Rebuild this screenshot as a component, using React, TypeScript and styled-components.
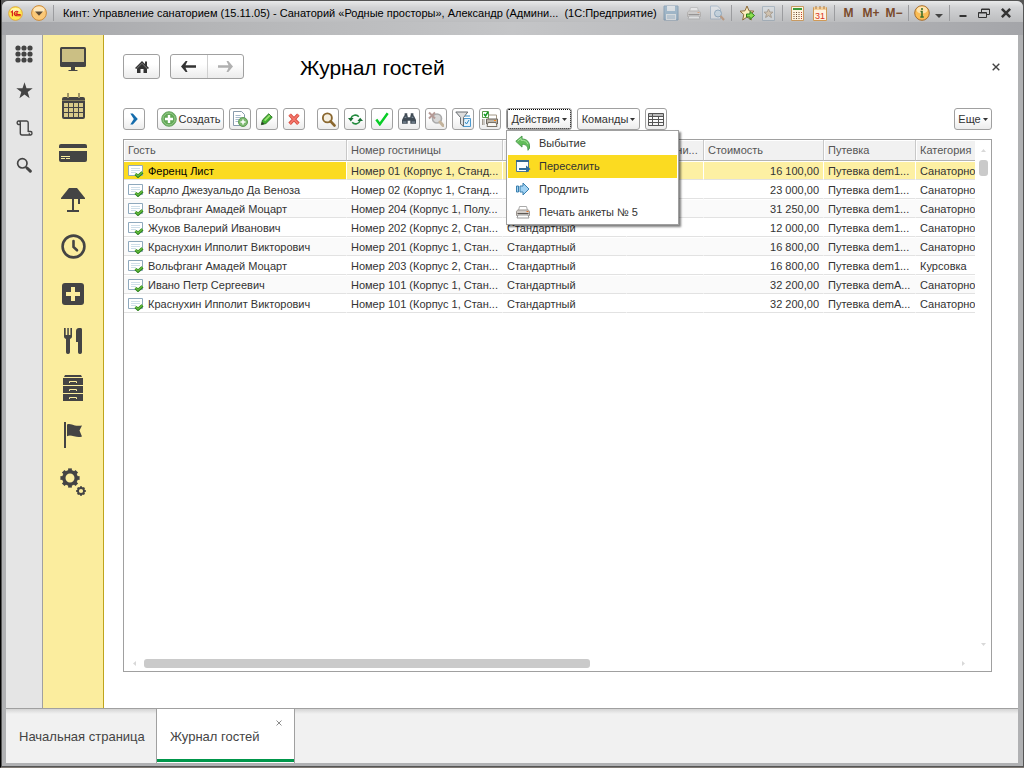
import React from "react";
import styled, { createGlobalStyle, css } from "styled-components";

const GlobalStyle = createGlobalStyle`
  * { box-sizing: border-box; }
  html, body { margin: 0; padding: 0; background: #000; }
  body { font-family: "Liberation Sans", Arial, sans-serif; font-size: 11px; line-height: 14px; color: #333; }
  button { font: inherit; color: inherit; margin: 0; padding: 0; border: 0; background: none; }
  svg { display: block; flex: none; }
`;

const Window = styled.div`
  display: flex;
  flex-direction: column;
  min-height: 100vh;
  padding: 1px 1px 1px;
  background: #555;
  border-left: 1px solid #000;
  border-bottom: 1px solid #807a74;
`;

const Frame = styled.div`
  flex: 1;
  display: flex;
  flex-direction: column;
  padding: 0 5px 3px 4px;
  border-radius: 6px 6px 0 0;
  background: #b0b1b3;
`;

const TitleBar = styled.header`
  display: flex;
  align-items: center;
  height: 34px;
  margin: 0 -5px 0 -4px;
  padding: 0 6px 10px 2px;
  border-radius: 6px 6px 0 0;
  background:
    linear-gradient(#e8e9ea, #d2d3d5 30%, #bcbdbf) 0 0 / 100% 21px no-repeat,
    linear-gradient(90deg, #a4a5a9, #b4b5b7 20%, #c4c5c7 50%, #b4b5b8 80%, #a4a5a9);
`;

const WindowTitle = styled.div`
  flex: 1;
  min-width: 0;
  padding-left: 6px;
  font-size: 11px;
  color: #000;
  white-space: pre;
  overflow: hidden;
`;

const TitleButton = styled.button<{ $w?: number; $dim?: boolean }>`
  display: flex;
  align-items: center;
  justify-content: center;
  flex: none;
  width: ${(p) => p.$w ?? 23}px;
  height: 20px;
  opacity: ${(p) => (p.$dim ? 0.45 : 1)};
`;

const MemoryButton = styled(TitleButton)`
  font-size: 12px;
  font-weight: bold;
  color: #7a4a2c;
`;

const TitleSeparator = styled.span`
  flex: none;
  width: 1px;
  height: 16px;
  margin: 0 3px;
  background: #9b9c9f;
`;

const Workspace = styled.div`
  flex: 1;
  display: flex;
  min-height: 0;
  background: #fff;
`;

const ToolRail = styled.nav`
  display: flex;
  flex-direction: column;
  width: 37px;
  background: #e5e5e5;
  border-right: 1px solid #a0a0a0;
`;

const SectionRail = styled.nav`
  display: flex;
  flex-direction: column;
  width: 61px;
  background: #fbed9e;
  border-right: 1px solid #bfa41c;
`;

const RailButton = styled.button<{ $h: number }>`
  display: flex;
  align-items: center;
  justify-content: center;
  height: ${(p) => p.$h}px;
  color: #444;
`;

const Main = styled.main`
  flex: 1;
  min-width: 0;
  display: flex;
  flex-direction: column;
  padding: 19px 26px 36px 19px;
`;

const PageHeader = styled.div`
  display: flex;
  align-items: center;
  height: 25px;
  margin-right: -13px;
`;

const raised = css`
  border: 1px solid #a0a0a0;
  border-radius: 3px;
  background: linear-gradient(#fff 40%, #ececec);
`;

const HomeButton = styled.button`
  ${raised}
  display: flex;
  align-items: center;
  justify-content: center;
  width: 37px;
  height: 25px;
`;

const HistoryButtons = styled.div`
  ${raised}
  display: flex;
  width: 74px;
  height: 25px;
  margin-left: 10px;
`;

const HistoryButton = styled.button`
  flex: 1;
  display: flex;
  align-items: center;
  justify-content: center;
  & + & { border-left: 1px solid #d0d0d0; }
`;

const PageTitle = styled.h1`
  flex: 1;
  margin: 0 0 0 56px;
  padding-top: 2px;
  font-size: 21px;
  line-height: 24px;
  font-weight: normal;
  color: #000;
`;

const CloseButton = styled.button`
  display: flex;
  padding: 5px;
`;

const Toolbar = styled.div`
  display: flex;
  gap: 5px;
  margin-top: 29px;
`;

const ToolButton = styled.button<{ $group?: boolean; $w?: number; $focused?: boolean }>`
  ${raised}
  display: flex;
  align-items: center;
  justify-content: center;
  gap: 2px;
  width: ${(p) => p.$w ?? 22}px;
  height: 22px;
  margin-left: ${(p) => (p.$group ? 7 : 0)}px;
  white-space: nowrap;
  ${(p) => p.$focused && css`outline: 1px dotted #000; outline-offset: -2px;`}
`;

const MoreSlot = styled.div`
  margin-left: auto;
`;

const MenuAnchor = styled.div`
  position: relative;
`;

const Menu = styled.ul`
  position: absolute;
  z-index: 2;
  top: 100%;
  left: 0;
  width: 173px;
  margin: 0;
  padding: 1px 1px 0;
  list-style: none;
  background: #fff;
  border: 1px solid #a0a0a0;
  box-shadow: 2px 2px 2px rgba(0, 0, 0, 0.5);
`;

const MenuItem = styled.button<{ $active?: boolean }>`
  display: flex;
  align-items: center;
  gap: 8px;
  width: 100%;
  height: 23px;
  padding: 0 0 2px 7px;
  background: ${(p) => (p.$active ? "#fbdb21" : "transparent")};
`;

const Grid = styled.section`
  flex: 1;
  display: grid;
  grid-template-columns: minmax(0, 1fr) 16px;
  grid-template-rows: minmax(0, 1fr) 16px;
  margin-top: 9px;
  border: 1px solid #a0a0a0;
`;

const TableArea = styled.div`
  overflow: hidden;
`;

const Table = styled.table`
  width: 100%;
  table-layout: fixed;
  border-collapse: separate;
  border-spacing: 0;
`;

const Col = styled.col<{ $w?: number }>`
  width: ${(p) => (p.$w ? `${p.$w}px` : "auto")};
`;

const HeadCell = styled.th`
  height: 21px;
  padding: 0 0 0 4px;
  font-weight: normal;
  text-align: left;
  white-space: nowrap;
  overflow: hidden;
  color: #555;
  background: #f1f1f1;
  border-right: 1px solid #c8c8c8;
  border-bottom: 1px solid #b4b4b4;
  box-shadow: inset 1px 1px #fff;
  &:last-child { border-right: 0; }
`;

const Row = styled.tr<{ $selected?: boolean }>`
  background: #fff;
  &:nth-child(odd) { background: #fafafa; }
  ${(p) => p.$selected && css`
    && { background: #fdf0a3; }
    td { border-right-color: #fff; }
    td:first-child { background: #fbdb21; color: #000; }
  `}
`;

const Cell = styled.td<{ $right?: boolean }>`
  height: 19px;
  padding: 2px 4px 0;
  text-align: ${(p) => (p.$right ? "right" : "left")};
  white-space: nowrap;
  overflow: hidden;
  border-right: 1px solid transparent;
  border-bottom: 1px solid #e2e2e2;
  box-shadow: inset 0 1px #fff;
  &:last-child { padding-right: 0; border-right: 0; }
`;

const GuestName = styled.div`
  display: flex;
  align-items: center;
  gap: 4px;
`;

const VerticalScroll = styled.div`
  display: flex;
  flex-direction: column;
  align-items: center;
  padding: 8px 0;
`;

const VerticalThumb = styled.div`
  width: 9px;
  height: 16px;
  margin: 7px 0 auto;
  border-radius: 3px;
  background: #cacaca;
`;

const HorizontalScroll = styled.div`
  display: flex;
  align-items: center;
  padding: 0 9px 0 8px;
`;

const HorizontalTrack = styled.div`
  flex: 1;
  padding: 0 7px;
`;

const HorizontalThumb = styled.div`
  width: 55%;
  height: 9px;
  border-radius: 3px;
  background: #cacaca;
`;

const TabBar = styled.footer`
  display: flex;
  height: 55px;
  background: linear-gradient(#d4d4d4, #f1f1f1 5px);
  border-top: 1px solid #a0a0a0;
`;

const Tab = styled.div<{ $active?: boolean; $w: number }>`
  position: relative;
  display: flex;
  align-items: center;
  width: ${(p) => p.$w}px;
  padding: 2px 0 0 13px;
  border-right: 1px solid #a0a0a0;
  ${(p) => p.$active && css`
    background: #fff;
    box-shadow: inset 0 -1px #fff, inset 0 -4px #00964a;
  `}
`;

const TabLabel = styled.button`
  font-size: 13px;
  white-space: nowrap;
  color: #444;
`;

const TabClose = styled.button`
  position: absolute;
  top: 11px;
  right: 12px;
`;

/* Icons */

type Size = { w?: number; h?: number };
const Svg = ({ w = 16, h = 16, vb = "0 0 16 16", children }: Size & { vb?: string; children: React.ReactNode }) => (
  <svg width={w} height={h} viewBox={vb} fill="none" aria-hidden="true">{children}</svg>
);

const Cross = ({ size = 8, color = "#444", width = 1.4 }: { size?: number; color?: string; width?: number }) => (
  <Svg w={size} h={size} vb="0 0 8 8"><path d="M.7.7l6.6 6.6M7.3.7L.7 7.3" stroke={color} strokeWidth={width} /></Svg>
);

const Caret = () => <Svg w={5} h={3} vb="0 0 5 3"><path d="M0 0h5L2.500 3z" fill="#333" /></Svg>;

const ScrollArrow = ({ d }: { d: string }) => <Svg w={5} h={5} vb="0 0 5 5"><path d={d} fill="#d8d8d8" /></Svg>;

const Logo = () => (
  <Svg w={15} h={15}>
    <circle cx="8" cy="8" r="7.300" fill="#ffe94e" stroke="#e0a63c" />
    <ellipse cx="8" cy="4.500" rx="5" ry="2.500" fill="#fff6a8" />
    <path d="M3 6.800l1.700-1.300V11M11 6.300C9.500 5 6.700 5.700 6.700 8c0 2.200 1.800 2.400 3 2.400h4M10.500 7.700c-1.200-.8-2 0-2 .6 0 .8.800.8 1.500.8h3.500" stroke="#d8201c" strokeWidth="1.200" />
  </Svg>
);

const MainMenuIcon = () => (
  <Svg>
    <circle cx="8" cy="8" r="7.400" fill="#fbc877" stroke="#c98a3c" />
    <ellipse cx="8" cy="4.700" rx="5.500" ry="3.200" fill="#fee6b8" />
    <path d="M4 6.500h8L8 10.800z" fill="#5c4a34" />
  </Svg>
);

const SaveIcon = () => (
  <Svg>
    <path d="M1 1h14v14H1z" fill="#6c9cc0" stroke="#3e6f96" />
    <path d="M4 1h8v5H4zM3 9h10v6H3z" fill="#e8f0f6" />
    <path d="M4 11h8M4 13h8" stroke="#6c9cc0" />
  </Svg>
);

const PrinterIcon = () => (
  <Svg>
    <path d="M4.500 2.500h7l1 4h-9z" fill="#fff" stroke="#aaa" />
    <path d="M1.500 8c0-1.200.8-2 2-2h9c1.200 0 2 .8 2 2v3.500h-13z" fill="#d2cdc8" stroke="#9a948f" />
    <path d="M2.500 9.500h11" stroke="#5c5753" />
    <path d="M3 11h10l1 3H2z" fill="#fff" stroke="#999" />
    <path d="M11.500 7.500h2" stroke="#e5762c" />
  </Svg>
);

const PreviewIcon = () => (
  <Svg>
    <path d="M1.500 1h7l3 3v10h-10z" fill="#eef3f8" stroke="#7f9cb8" />
    <circle cx="9" cy="8.500" r="3.500" fill="#bcd9ee" stroke="#4b7da6" />
    <path d="M11.500 11l3.500 4" stroke="#b06a35" strokeWidth="2" />
  </Svg>
);

const starPath = "M8 1l2 4.800 5 .4-3.800 3.300L12.300 15 8 12l-4.300 3 1.100-5.500L1 6.200l5-.4z";

const FavoriteAddIcon = () => (
  <Svg>
    <path d={starPath} fill="#fceec0" stroke="#8d6b3c" />
    <path d="M7.500 9h3.500V6.500l4.500 4-4.500 4V12H7.500z" fill="#8de04e" stroke="#2c7d1a" />
  </Svg>
);

const FavoritesIcon = () => (
  <Svg w={13} h={15} vb="0 0 13 15">
    <path d="M.5.5h12v14H.5z" fill="#dce4ea" stroke="#7f96aa" />
    <path d="M6.500 3l1.300 3 3.200.2-2.500 2 .9 3.300-2.900-1.900-2.900 1.900.9-3.300-2.500-2L5.200 6z" fill="#d9b98b" stroke="#806a50" />
  </Svg>
);

const CalculatorIcon = () => (
  <Svg w={13} h={15} vb="0 0 13 15">
    <path d="M.5.500h12v14H.5z" fill="#fff4df" stroke="#c79a63" />
    <path d="M2 2h9v2H2z" fill="#3c9a3c" />
    <path d="M3 6v8M5.500 6v8M8 6v8" stroke="#6b4a33" strokeDasharray="1 1" />
    <path d="M10.500 6v8" stroke="#c43a2a" strokeDasharray="1 1" />
  </Svg>
);

const DateText = styled.text`
  font-size: 9px;
  fill: #dc3323;
`;

const CalendarIcon = () => (
  <Svg w={14} h={15} vb="0 0 14 15">
    <path d="M.5 1.500h13v13H.5z" fill="#fff3e0" stroke="#cf9a58" />
    <path d="M1 1h12v3H1z" fill="#f4cf9a" />
    <path d="M3 0v3M7 0v3M11 0v3" stroke="#a87a48" />
    <DateText x="7" y="13" textAnchor="middle">31</DateText>
  </Svg>
);

const InfoIcon = () => (
  <Svg>
    <circle cx="8" cy="8" r="7.300" fill="#fbbd55" stroke="#a66c2b" />
    <ellipse cx="8" cy="5" rx="5.500" ry="3.500" fill="#fee3ac" />
    <path d="M8 3v2M6.500 6.500H8V12M6.300 12h3.500" stroke="#3f702b" strokeWidth="1.600" />
  </Svg>
);

const MinimizeIcon = () => <Svg w={8} h={12} vb="0 0 8 12"><path d="M.5 9h7" stroke="#333" strokeWidth="2" /></Svg>;
const RestoreIcon = () => (
  <Svg w={12} h={11} vb="0 0 12 11">
    <path d="M3.500 4V1h8v5.500H9M3.500 1.500h8M.5 4.500h8v5h-8zM.5 5h8" stroke="#333" />
  </Svg>
);

const AppsIcon = () => (
  <Svg w={18} h={18} vb="0 0 18 18">
    {[3, 9, 15].map((y) => [3, 9, 15].map((x) => <circle key={`${x}-${y}`} cx={x} cy={y} r="2.600" fill="currentColor" />))}
  </Svg>
);
const StarIcon = () => <Svg w={17} h={17} vb="0 0 17 17"><path d="M8.500.3l2 5.900h6.200l-5 3.700 1.900 6.300-5.100-3.700-5.100 3.700 1.900-6.300-5-3.700h6.200z" fill="currentColor" /></Svg>;
const ScrollIcon = () => (
  <Svg w={17} h={16} vb="0 0 17 16">
    <path d="M2.500 1h8.200c1 0 1.500.8 1.500 1.800V12M4.300 4v9c0 1.300.7 2 1.700 2h8.700M12.200 11.500h2.500c1.700 0 1.700 3.500 0 3.500-1 0-1.500-.7-1.500-1.700M4.300 4.500H2.500C.7 4.500.7 1 2.500 1c1.100 0 1.800.8 1.800 1.800z" stroke="currentColor" strokeWidth="1.400" />
  </Svg>
);
const SearchIcon = () => (
  <Svg w={16} h={16}>
    <circle cx="6.300" cy="6.300" r="4.700" stroke="currentColor" strokeWidth="1.700" />
    <path d="M9.800 9.800l1.200 1.200" stroke="currentColor" strokeWidth="1.500" />
    <path d="M11 11l3.300 3.200" stroke="currentColor" strokeWidth="3" strokeLinecap="round" />
  </Svg>
);

const MonitorIcon = () => (
  <Svg w={26} h={24} vb="0 0 26 24">
    <rect width="26" height="20" rx="1.500" fill="#444" />
    <path d="M2 2h22v13H2z" fill="#cbbf84" />
    <path d="M11 20h4v3h2.500v1h-9v-1H11z" fill="#444" />
  </Svg>
);
const ScheduleIcon = () => (
  <Svg w={24} h={26} vb="0 0 24 26">
    <rect x="1" y="4" width="23" height="22" rx="2" fill="#444" />
    <path d="M1 7.500h23" stroke="#847d5a" />
    <path d="M7 0v5M18 0v5" stroke="#9e9467" strokeWidth="2" />
    {[10, 15, 20].map((y) => [3, 8, 13, 18].map((x) => <rect key={`${x}-${y}`} x={x} y={y} width="4" height="4" fill="#d9cb89" />))}
  </Svg>
);
const CardIcon = () => (
  <Svg w={28} h={18} vb="0 0 28 18">
    <path d="M0 4V2a2 2 0 012-2h24a2 2 0 012 2v2zM0 7h28v9a2 2 0 01-2 2H2a2 2 0 01-2-2z" fill="#444" />
    <path d="M2 12.500h9M2 14.500h4M7 14.500h4" stroke="#fbed9e" />
  </Svg>
);
const LampIcon = () => (
  <Svg w={24} h={24} vb="0 0 24 24">
    <path d="M8 0h8l8 10v1H0v-1z" fill="#444" />
    <path d="M12 11v12M6 23h12M18 11v5" stroke="#444" strokeWidth="2" />
  </Svg>
);
const ClockIcon = () => (
  <Svg w={25} h={25} vb="0 0 25 25">
    <circle cx="12.500" cy="12.500" r="10.900" stroke="#444" strokeWidth="2.600" />
    <path d="M12.500 7v6l3.500 3.300" stroke="#444" strokeWidth="2.600" strokeLinecap="round" />
  </Svg>
);
const MedicalIcon = () => (
  <Svg w={22} h={22} vb="0 0 22 22">
    <rect width="22" height="22" rx="3" fill="#444" />
    <path d="M9 4h4v5h5v4h-5v5H9v-5H4V9h5z" fill="#fbed9e" />
  </Svg>
);
const DiningIcon = () => (
  <Svg w={18} h={26} vb="0 0 18 26">
    <path d="M0 0h1.700v7h1.600V0h1.500v7h1.600V0H8v8.500c0 1-.7 2-2 2.500v13c0 2.700-4 2.700-4 0V11C.7 10.500 0 9.500 0 8.500zM12 14V3c0-2 1.300-3 3-3h1.500c1 0 1.500.7 1.500 1.700V24c0 2.700-4 2.700-4 0V14z" fill="#444" />
  </Svg>
);
const CabinetIcon = () => (
  <Svg w={20} h={26} vb="0 0 20 26">
    <path d="M2 0h16l1 2H1zM0 3h20v7H0zM0 11h20v7H0zM0 19h20v7H0z" fill="#444" />
    <path d="M6.500 8V6.500h7V8M6.500 16v-1.500h7V16M6.500 24v-1.500h7V24" stroke="#fbed9e" />
  </Svg>
);
const FlagIcon = () => (
  <Svg w={18} h={26} vb="0 0 18 26">
    <path d="M0 0h2v26H0z" fill="#444" />
    <path d="M3 2.500c3-1.200 5 .5 8 1 2.500.5 5 .2 7 0l-2.500 5L18 14.500c-3 1-5 .5-8-.2-3-.8-5-1-7 0z" fill="#444" />
  </Svg>
);
const Gear = ({ x, y, r, w }: { x: number; y: number; r: number; w: number }) => (
  <g transform={`translate(${x} ${y})`}>
    <circle r={r} stroke="#444" strokeWidth={w} />
    {[0, 45, 90, 135, 180, 225, 270, 315].map((a) => (
      <path key={a} d={`M0 ${-r}V${-r - w}`} stroke="#444" strokeWidth={w * 1.1} transform={`rotate(${a})`} />
    ))}
  </g>
);
const SettingsIcon = () => <Svg w={26} h={28} vb="0 0 26 28"><Gear x={10} y={10} r={6.2} w={3.4} /><Gear x={21} y={23} r={3} w={1.8} /></Svg>;

const HomeIcon = () => (
  <Svg w={16} h={14} vb="0 0 16 14">
    <path d="M8 1L1 8l1.200 1L8 3.300 13.800 9 15 8l-2-2V1.500h-2V4z" fill="#333" />
    <path d="M3 8.500L8 3.500l5 5V13H9.500V9h-3v4H3z" fill="#333" />
  </Svg>
);
const ArrowIcon = ({ forward }: { forward?: boolean }) => (
  <Svg w={15} h={11} vb="0 0 15 11">
    <path d={forward ? "M8.500 0h1.800L15 5.500 10.300 11H8.500L10.500 6.800H0V4.200h10.500z" : "M6.500 0H4.700L0 5.500 4.700 11h1.800L4.500 6.800H15V4.200H4.500z"} fill={forward ? "#b0b0b0" : "#333"} />
  </Svg>
);
const ExpandIcon = () => <Svg w={8} h={12} vb="0 0 8 12"><path d="M.3.5h2.500L7.800 6l-5 5.500H.3L3.800 6z" fill="#146cac" /></Svg>;
const PlusIcon = () => (
  <Svg>
    <circle cx="8" cy="8" r="7.300" fill="#63a957" stroke="#6ba863" />
    <circle cx="8" cy="8" r="6" stroke="#98cb8d" />
    <path d="M8 4v8M4 8h8" stroke="#fff" strokeWidth="2.400" />
  </Svg>
);
const CopyIcon = () => (
  <Svg>
    <path d="M1.500.5h8l3 3v11h-11z" fill="#fff" stroke="#879aac" />
    <path d="M3.500 4.500h5M3.500 6.500h6M3.500 8.500h4M3.500 10.500h3" stroke="#a5b9cb" />
    <circle cx="11" cy="11" r="4.500" fill="#7fba72" stroke="#5d9c55" />
    <path d="M11 8.500v5M8.500 11h5" stroke="#fff" strokeWidth="1.500" />
  </Svg>
);
const PencilIcon = () => (
  <Svg w={14} h={14}>
    <path d="M1.500 14.500l1.300-5.300L10 2l4 4-7.200 7.200z" fill="#3fae2f" stroke="#236d1a" />
    <path d="M4.500 9l6-6 1.500 1.500-6 6z" fill="#9ae071" />
    <path d="M1.500 14.500l.8-3.300 2.500 2.500z" fill="#333" />
  </Svg>
);
const DeleteIcon = () => <Svg w={14} h={14}><path d="M3 3l10 10.500M13 3L3 13.500" stroke="#d44a3e" strokeWidth="4" /><path d="M3 3l10 10.500M13 3L3 13.500" stroke="#f4776b" strokeWidth="2" /></Svg>;
const FindIcon = () => (
  <Svg w={15} h={15}>
    <circle cx="6.800" cy="6.300" r="4.800" stroke="#8a672f" strokeWidth="2" fill="#f5efe0" />
    <path d="M10.300 10l4 4.300" stroke="#8a672f" strokeWidth="3" strokeLinecap="round" />
  </Svg>
);
const RefreshIcon = () => (
  <Svg w={15} h={15}>
    <path d="M3.300 6.500C4 3.500 9 2 11.500 5M12.700 9.500C12 12.500 7 14 4.500 11" stroke="#238b3e" strokeWidth="1.700" />
    <path d="M0 6.500h6L3 10zM16 9.500h-6L13 6z" fill="#187033" />
  </Svg>
);
const CheckIcon = () => <Svg w={14} h={14}><path d="M1.500 8.500L5.500 14 14.500 1.500" stroke="#07cd25" strokeWidth="2.800" /></Svg>;
const BinocularsIcon = () => (
  <Svg w={14} h={14}>
    <path d="M2.500 4h4v9.500H0V9zM9.500 4h4L16 9v4.500H9.500zM6 6h4v4H6zM3 1.500h3V4H3zM10 1.500h3V4h-3z" fill="#404b55" />
    <path d="M1 11.500h4M11 11.500h4M3 6h2M11 6h2" stroke="#9aabbb" />
  </Svg>
);
const ClearFindIcon = () => (
  <Svg>
    <circle cx="9" cy="7.500" r="4.500" fill="#d7d7d7" stroke="#aaa" strokeWidth="1.600" />
    <path d="M12 11l3 3.500" stroke="#c3b39c" strokeWidth="3" strokeLinecap="round" />
    <path d="M1 1.500l6 6M7 1.500l-6 6" stroke="#b59a96" strokeWidth="2" />
  </Svg>
);
const FilterIcon = () => (
  <Svg>
    <path d="M9 7.500h6.500v8H8z" fill="#e2f1fb" stroke="#4c9ad0" />
    <path d="M.8 1h12L8.500 6.500V15l-3-2V6.500z" fill="#dedede" stroke="#686d71" />
    <path d="M10 11l1.500 2L14 9M10 5h5" stroke="#3187c1" />
  </Svg>
);
const PrintListIcon = () => (
  <Svg>
    <path d="M6.500 4h8v5h-8z" fill="#fff" stroke="#a19684" />
    <path d="M4.500 8h11v5h-11z" fill="#bdb5a8" stroke="#6d675f" />
    <path d="M6 11.500h8l1 4H5z" fill="#f8f6f2" stroke="#79736a" />
    <path d="M.5.5h6v6h-6z" fill="#fff" stroke="#5a9d4a" />
    <path d="M2 3l1.500 2L6 1" stroke="#129a22" strokeWidth="1.500" />
    <path d="M.5 8v6M2 8v6" stroke="#a09a90" />
    <path d="M12 9.500h2" stroke="#fc8b1a" />
  </Svg>
);
const LayoutIcon = () => (
  <Svg w={16} h={13} vb="0 0 16 13">
    <path d="M1 1h14v2H1z" fill="#bbb" />
    <path d="M.5.5h15v12H.5zM.5 3.500h15M.5 6.500h15M.5 9.500h15M4.500.5v12M10.500 3.500v9" stroke="#555" />
  </Svg>
);
const LeaveIcon = () => (
  <Svg>
    <path d="M.8 6.300L7 1v3c5 0 8 3 7.500 9-.2 1-1.200 1.300-1.500 2.300 0-4-1.800-6-6-6v2.800z" fill="#62bd5a" stroke="#4d9c50" />
    <path d="M2.500 6.200L6 3.300v1.900c3.500 0 6 1 7 4" stroke="#a9e49e" />
  </Svg>
);
const MoveIcon = () => (
  <Svg>
    <path d="M1.500 2.500h12v11h-12z" fill="#f9fdff" stroke="#4f7896" />
    <path d="M1 2h13v2H1z" fill="#33678f" />
    <path d="M4 10h7V7.500l4.500 3.500-4.500 3.500V12H4z" fill="#2f6c9b" />
  </Svg>
);
const ExtendIcon = () => (
  <Svg w={14} h={14} vb="0 0 14 14">
    <path d="M4 4h3V1l6 6-6 6v-3H4zM.5 4h2v6h-2z" fill="#a1d2f3" stroke="#397fae" />
  </Svg>
);
const DocumentIcon = () => (
  <Svg w={16} h={14} vb="0 0 16 14">
    <path d="M.5 1.500h14v10H.5z" fill="#fff" stroke="#8fa9bd" />
    <path d="M3 4.500h9M3 6.500h9M3 8.500h5" stroke="#cfdfe9" />
    <path d="M7.500 10l2.500 2.300 4.500-4" stroke="#277e19" strokeWidth="3" />
    <path d="M7.500 9.800l2.500 2.300 4.500-4" stroke="#64ba3e" strokeWidth="1.500" />
  </Svg>
);

/* Data */

const columns = [
  { title: "Гость", width: 223 },
  { title: "Номер гостиницы", width: 156 },
  { title: "", width: 124 },
  { title: "Примечани...", width: 77 },
  { title: "Стоимость", width: 120 },
  { title: "Путевка", width: 92 },
  { title: "Категория" },
];

const guests = [
  ["Ференц Лист", "Номер 01 (Корпус 1, Станд...", "", "16 100,00", "Путевка dem1...", "Санаторно-"],
  ["Карло Джезуальдо Да Веноза", "Номер 02 (Корпус 1, Станд...", "", "23 000,00", "Путевка dem1...", "Санаторно-"],
  ["Вольфганг Амадей Моцарт", "Номер 204 (Корпус 1, Полу...", "", "31 250,00", "Путевка dem1...", "Санаторно-"],
  ["Жуков Валерий Иванович", "Номер 202 (Корпус 2, Стан...", "Стандартный", "12 000,00", "Путевка dem1...", "Санаторно-"],
  ["Краснухин Ипполит Викторович", "Номер 201 (Корпус 1, Стан...", "Стандартный", "16 800,00", "Путевка dem1...", "Санаторно-"],
  ["Вольфганг Амадей Моцарт", "Номер 203 (Корпус 2, Стан...", "Стандартный", "16 800,00", "Путевка dem1...", "Курсовка"],
  ["Ивано Петр Сергеевич", "Номер 101 (Корпус 1, Стан...", "Стандартный", "32 200,00", "Путевка demA...", "Санаторно-"],
  ["Краснухин Ипполит Викторович", "Номер 101 (Корпус 1, Стан...", "Стандартный", "32 200,00", "Путевка demA...", "Санаторно-"],
];

const sections = [
  ["Рабочий стол", MonitorIcon], ["Календарь", ScheduleIcon], ["Оплата", CardIcon], ["Номера", LampIcon], ["Время", ClockIcon],
  ["Медицина", MedicalIcon], ["Питание", DiningIcon], ["Архив", CabinetIcon], ["Отчеты", FlagIcon], ["Настройки", SettingsIcon],
] as const;

const tools = [["Меню", AppsIcon], ["Избранное", StarIcon], ["История", ScrollIcon], ["Поиск", SearchIcon]] as const;

const actions = [["Выбытие", LeaveIcon], ["Переселить", MoveIcon], ["Продлить", ExtendIcon], ["Печать анкеты № 5", PrinterIcon]] as const;

const IconSlot = styled.span`
  display: flex;
  justify-content: center;
  width: 16px;
`;

export default function App() {
  return (
    <>
      <GlobalStyle />
      <Window>
        <Frame>
          <TitleBar>
            <TitleButton aria-label="1С"><Logo /></TitleButton>
            <TitleButton aria-label="Главное меню"><MainMenuIcon /></TitleButton>
            <TitleSeparator />
            <WindowTitle>Кинт: Управление санаторием (15.11.05) - Санаторий «Родные просторы», Александр (Админи...  (1С:Предприятие)</WindowTitle>
            <TitleButton $dim aria-label="Сохранить"><SaveIcon /></TitleButton>
            <TitleButton $dim aria-label="Печать"><PrinterIcon /></TitleButton>
            <TitleButton $dim aria-label="Просмотр"><PreviewIcon /></TitleButton>
            <TitleSeparator />
            <TitleButton aria-label="Добавить в избранное"><FavoriteAddIcon /></TitleButton>
            <TitleButton $w={21} $dim aria-label="Избранное"><FavoritesIcon /></TitleButton>
            <TitleSeparator />
            <TitleButton $w={22} aria-label="Калькулятор"><CalculatorIcon /></TitleButton>
            <TitleButton $w={23} aria-label="Календарь"><CalendarIcon /></TitleButton>
            <TitleSeparator />
            <MemoryButton $w={21}>M</MemoryButton>
            <MemoryButton $w={24}>M+</MemoryButton>
            <MemoryButton $w={22}>M−</MemoryButton>
            <TitleSeparator />
            <TitleButton $w={20} aria-label="Справка"><InfoIcon /></TitleButton>
            <TitleButton $w={14} aria-label="Еще"><Svg w={8} h={9} vb="0 0 8 9"><path d="M0 5h8L4 9z" fill="#444" /></Svg></TitleButton>
            <TitleSeparator />
            <TitleButton $w={20} aria-label="Свернуть"><MinimizeIcon /></TitleButton>
            <TitleButton $w={22} aria-label="Развернуть"><RestoreIcon /></TitleButton>
            <TitleButton $w={22} aria-label="Закрыть"><Cross size={10} width={2} color="#333" /></TitleButton>
          </TitleBar>
          <Workspace>
            <ToolRail>
              {tools.map(([name, Icon]) => <RailButton key={name} $h={37} aria-label={name}><Icon /></RailButton>)}
            </ToolRail>
            <SectionRail>
              {sections.map(([name, Icon]) => <RailButton key={name} $h={47} aria-label={name}><Icon /></RailButton>)}
            </SectionRail>
            <Main>
              <PageHeader>
                <HomeButton aria-label="Домой"><HomeIcon /></HomeButton>
                <HistoryButtons>
                  <HistoryButton aria-label="Назад"><ArrowIcon /></HistoryButton>
                  <HistoryButton aria-label="Вперед"><ArrowIcon forward /></HistoryButton>
                </HistoryButtons>
                <PageTitle>Журнал гостей</PageTitle>
                <CloseButton aria-label="Закрыть"><Cross /></CloseButton>
              </PageHeader>
              <Toolbar>
                <ToolButton aria-label="Развернуть"><ExpandIcon /></ToolButton>
                <ToolButton $group $w={67}><PlusIcon />Создать</ToolButton>
                <ToolButton aria-label="Скопировать"><CopyIcon /></ToolButton>
                <ToolButton aria-label="Изменить"><PencilIcon /></ToolButton>
                <ToolButton aria-label="Удалить"><DeleteIcon /></ToolButton>
                <ToolButton $group aria-label="Найти"><FindIcon /></ToolButton>
                <ToolButton aria-label="Обновить"><RefreshIcon /></ToolButton>
                <ToolButton aria-label="Провести"><CheckIcon /></ToolButton>
                <ToolButton aria-label="Поиск"><BinocularsIcon /></ToolButton>
                <ToolButton aria-label="Отменить поиск"><ClearFindIcon /></ToolButton>
                <ToolButton aria-label="Отбор"><FilterIcon /></ToolButton>
                <ToolButton aria-label="Печать списка"><PrintListIcon /></ToolButton>
                <MenuAnchor>
                  <ToolButton $w={66} $focused aria-expanded="true">Действия<Caret /></ToolButton>
                  <Menu>
                    {actions.map(([name, Icon]) => (
                      <li key={name}>
                        <MenuItem $active={name === "Переселить"}><IconSlot><Icon /></IconSlot>{name}</MenuItem>
                      </li>
                    ))}
                  </Menu>
                </MenuAnchor>
                <ToolButton $w={63}>Команды<Caret /></ToolButton>
                <ToolButton aria-label="Вид"><LayoutIcon /></ToolButton>
                <MoreSlot><ToolButton $w={38}>Еще<Caret /></ToolButton></MoreSlot>
              </Toolbar>
              <Grid>
                <TableArea>
                  <Table>
                    <colgroup>{columns.map((c) => <Col key={c.title} $w={c.width} />)}</colgroup>
                    <thead><tr>{columns.map((c) => <HeadCell key={c.title} scope="col">{c.title}</HeadCell>)}</tr></thead>
                    <tbody>
                      {guests.map(([name, room, kind, cost, voucher, category], i) => (
                        <Row key={i} $selected={i === 0}>
                          <Cell><GuestName><DocumentIcon />{name}</GuestName></Cell>
                          <Cell>{room}</Cell>
                          <Cell>{kind}</Cell>
                          <Cell />
                          <Cell $right>{cost}</Cell>
                          <Cell>{voucher}</Cell>
                          <Cell>{category}</Cell>
                        </Row>
                      ))}
                    </tbody>
                  </Table>
                </TableArea>
                <VerticalScroll>
                  <ScrollArrow d="M0 4l2.500-3L5 4z" />
                  <VerticalThumb />
                  <ScrollArrow d="M0 1l2.500 3L5 1z" />
                </VerticalScroll>
                <HorizontalScroll>
                  <ScrollArrow d="M4 0L1 2.500 4 5z" />
                  <HorizontalTrack><HorizontalThumb /></HorizontalTrack>
                  <ScrollArrow d="M1 0l3 2.500L1 5z" />
                </HorizontalScroll>
              </Grid>
            </Main>
          </Workspace>
          <TabBar>
            <Tab $w={151}><TabLabel>Начальная страница</TabLabel></Tab>
            <Tab $w={138} $active>
              <TabLabel>Журнал гостей</TabLabel>
              <TabClose aria-label="Закрыть вкладку"><Cross size={6} color="#888" width={1.3} /></TabClose>
            </Tab>
          </TabBar>
        </Frame>
      </Window>
    </>
  );
}
